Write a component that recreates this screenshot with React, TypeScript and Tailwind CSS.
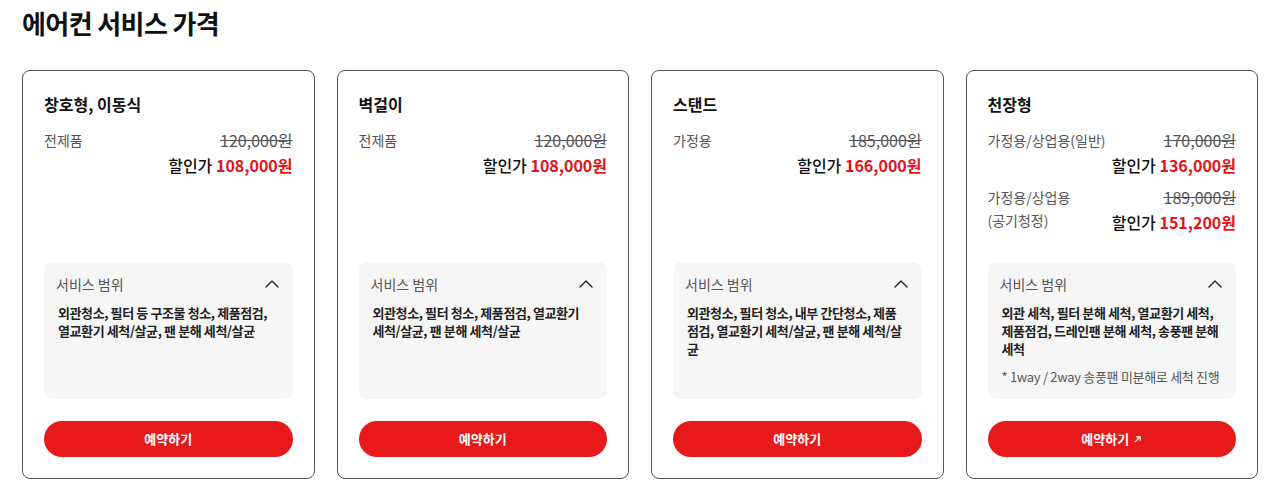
import React from 'react';
import { ChevronUp } from 'lucide-react';

type PriceRow = {
  label: React.ReactNode;
  original: string;
  sale: string;
};

type Plan = {
  name: string;
  rows: PriceRow[];
  scope: string;
  note?: string;
  external?: boolean;
};

const plans: Plan[] = [
  {
    name: '창호형, 이동식',
    rows: [{ label: '전제품', original: '120,000원', sale: '108,000원' }],
    scope: '외관청소, 필터 등 구조물 청소, 제품점검, 열교환기 세척/살균, 팬 분해 세척/살균',
  },
  {
    name: '벽걸이',
    rows: [{ label: '전제품', original: '120,000원', sale: '108,000원' }],
    scope: '외관청소, 필터 청소, 제품점검, 열교환기 세척/살균, 팬 분해 세척/살균',
  },
  {
    name: '스탠드',
    rows: [{ label: '가정용', original: '185,000원', sale: '166,000원' }],
    scope: '외관청소, 필터 청소, 내부 간단청소, 제품점검, 열교환기 세척/살균, 팬 분해 세척/살균',
  },
  {
    name: '천장형',
    rows: [
      { label: '가정용/상업용(일반)', original: '170,000원', sale: '136,000원' },
      {
        label: (
          <>
            가정용/상업용
            <br />
            (공기청정)
          </>
        ),
        original: '189,000원',
        sale: '151,200원',
      },
    ],
    scope: '외관 세척, 필터 분해 세척, 열교환기 세척, 제품점검, 드레인팬 분해 세척, 송풍팬 분해 세척',
    note: '* 1way / 2way 송풍팬 미분해로 세척 진행',
    external: true,
  },
];

const PriceCard: React.FC<{ plan: Plan }> = ({ plan }) => (
  <div className="flex h-[409px] flex-col rounded-lg border border-[#555] bg-white px-[21px] pt-[21px] pb-[21px]">
    <h3 className="text-base leading-6 font-bold text-[#111]">{plan.name}</h3>

    <div className="mt-[13px] flex flex-col gap-[9px]">
      {plan.rows.map((row, i) => (
        <div key={i} className="flex items-start justify-between">
          <p className="text-sm leading-[23px] text-[#555]">{row.label}</p>
          <div className="flex flex-col items-end">
            <span className="text-base leading-[22px] text-[#555] line-through">{row.original}</span>
            <span className="mt-[2px] text-base leading-6 font-medium text-[#111]">
              할인가 <b className="font-bold text-[#e5121a]">{row.sale}</b>
            </span>
          </div>
        </div>
      ))}
    </div>

    {/* Service scope */}
    <div className="mt-auto h-[137px] rounded-lg bg-[#f6f6f6] px-3 pt-3">
      <div className="flex h-5 items-center justify-between">
        <span className="text-sm leading-5 text-[#555]">서비스 범위</span>
        <ChevronUp className="-mr-[3px] h-6 w-6 shrink-0 text-[#222]" strokeWidth={1.4} />
      </div>
      <p className="mt-[10px] px-[2px] text-[13px] leading-[18px] font-bold tracking-[-0.4px] text-[#222]">
        {plan.scope}
      </p>
      {plan.note && (
        <p className="mt-[10px] px-[2px] text-[13px] leading-[18px] tracking-[-0.3px] text-[#555]">{plan.note}</p>
      )}
    </div>

    <button className="mt-[22px] flex h-9 w-full items-center justify-center gap-1 rounded-full bg-[#e8191a] text-[13px] font-bold text-white">
      예약하기
      {plan.external && (
        <svg viewBox="0 0 10 10" className="h-[9px] w-[9px]" fill="none" stroke="currentColor" strokeWidth={1.3}>
          <path d="M2 8L8 2M3.5 2H8V6.5" />
        </svg>
      )}
    </button>
  </div>
);

export default function App() {
  return (
    <div
      className="min-h-[493px] bg-white px-[22px] pt-[7px]"
      style={{ fontFamily: '"Noto Sans CJK KR", "Noto Sans", sans-serif' }}
    >
      <h2 className="text-[26px] leading-8 font-bold tracking-[-0.6px] text-[#111]">에어컨 서비스 가격</h2>
      <div className="mt-[31px] grid grid-cols-4 gap-[22px]">
        {plans.map((p) => (
          <PriceCard key={p.name} plan={p} />
        ))}
      </div>
    </div>
  );
}
